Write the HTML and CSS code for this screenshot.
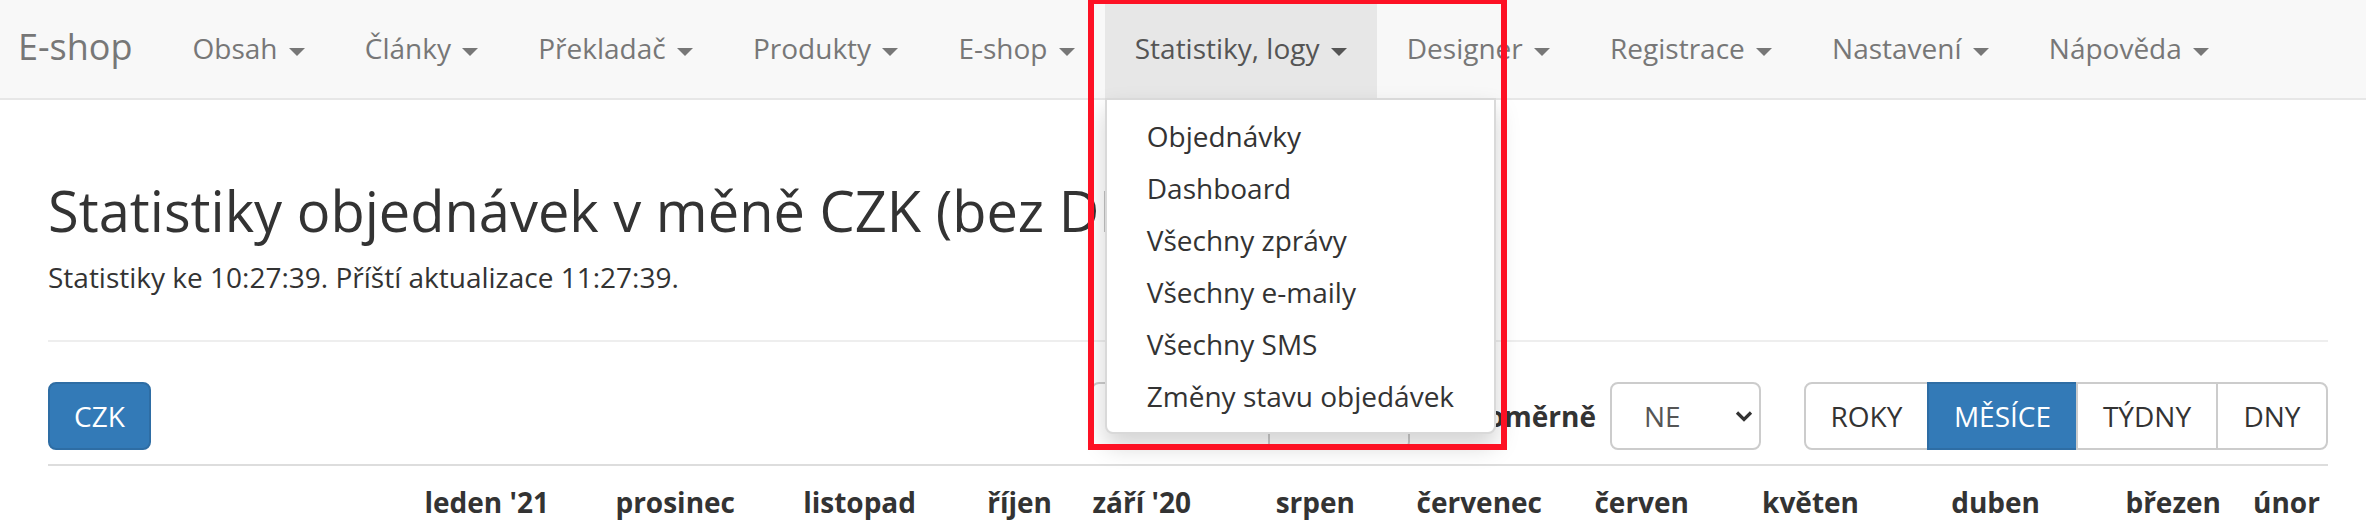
FILE: index.html
```html
<!DOCTYPE html>
<html lang="cs">
  <head>
    <meta charset="UTF-8" />
    <meta name="viewport" content="width=device-width, initial-scale=1.0" />
    <title>Statistiky objednávek</title>
    <link rel="stylesheet" href="styles.css">
  </head>
  <body>
    <nav class="navbar">
      <a class="brand" href="#">E-shop</a>
      <ul class="nav">
        <li><a href="#">Obsah <span class="caret"></span></a></li>
        <li><a href="#">Články <span class="caret"></span></a></li>
        <li><a href="#">Překladač <span class="caret"></span></a></li>
        <li><a href="#">Produkty <span class="caret"></span></a></li>
        <li><a href="#">E-shop <span class="caret"></span></a></li>
        <li class="open">
          <a href="#">Statistiky, logy <span class="caret"></span></a>
          <ul class="dropdown">
            <li><a href="#">Objednávky</a></li>
            <li><a href="#">Dashboard</a></li>
            <li><a href="#">Všechny zprávy</a></li>
            <li><a href="#">Všechny e-maily</a></li>
            <li><a href="#">Všechny SMS</a></li>
            <li><a href="#">Změny stavu objedávek</a></li>
          </ul>
        </li>
        <li><a href="#">Designer <span class="caret"></span></a></li>
        <li><a href="#">Registrace <span class="caret"></span></a></li>
        <li><a href="#">Nastavení <span class="caret"></span></a></li>
        <li><a href="#">Nápověda <span class="caret"></span></a></li>
      </ul>
    </nav>

    <!-- red highlight drawn over the open menu -->
    <div class="highlight"></div>

    <main class="page">
      <h1>Statistiky objednávek v měně CZK (bez DPH)</h1>
      <p class="updated">Statistiky ke 10:27:39. Příští aktualizace 11:27:39.</p>
      <hr />

      <div class="controls">
        <button type="button" class="btn btn-primary">CZK</button>

        <div class="filters">
          <div class="btn-group view">
            <button type="button" class="btn">Tabulka</button>
            <button type="button" class="btn">Graf</button>
          </div>

          <label class="ratio">Poměrně</label>
          <div class="select">
            <span>NE</span>
            <svg width="18" height="12" viewBox="0 0 18 12"><path d="M2 2.5 L9 9.5 L16 2.5" fill="none" stroke="#333" stroke-width="3.2"/></svg>
          </div>

          <div class="btn-group period">
            <button type="button" class="btn">ROKY</button>
            <button type="button" class="btn btn-primary">MĚSÍCE</button>
            <button type="button" class="btn">TÝDNY</button>
            <button type="button" class="btn">DNY</button>
          </div>
        </div>
      </div>

      <table class="stats">
        <thead>
          <tr>
            <th></th>
            <th>leden '21</th>
            <th>prosinec</th>
            <th>listopad</th>
            <th>říjen</th>
            <th>září '20</th>
            <th>srpen</th>
            <th>červenec</th>
            <th>červen</th>
            <th>květen</th>
            <th>duben</th>
            <th>březen</th>
            <th>únor</th>
          </tr>
        </thead>
      </table>
    </main>
  </body>
</html>
```

FILE: styles.css
```css
* {
  box-sizing: border-box;
}

body {
  margin: 0;
  font-family: "Open Sans", "Liberation Sans", sans-serif;
  font-size: 28px;
  line-height: 40px;
  color: #333;
  background-color: #fff;
  overflow: hidden;
}

a {
  text-decoration: none;
}

/* navbar */

.navbar {
  display: flex;
  height: 100px;
  background-color: #f8f8f8;
  border-bottom: 2px solid #e7e7e7;
}

.brand {
  padding: 27px 30px 0 18px;
  font-size: 36px;
  color: #777;
}

.nav {
  display: flex;
  margin: 0;
  padding: 0;
  list-style: none;
}

.nav > li {
  position: relative;
}

.nav > li > a {
  display: block;
  padding: 28px 30px 30px;
  color: #777;
}

.nav > li.open > a {
  background-color: #e7e7e7;
  color: #555;
}

.caret {
  display: inline-block;
  width: 0;
  height: 0;
  margin-left: 4px;
  vertical-align: middle;
  border-top: 8px solid;
  border-left: 8px solid transparent;
  border-right: 8px solid transparent;
}

.dropdown {
  position: absolute;
  top: 100%;
  left: 0;
  z-index: 10;
  min-width: 320px;
  margin: 0;
  padding: 10px 0;
  list-style: none;
  background-color: #fff;
  border: 2px solid rgba(0, 0, 0, 0.15);
  border-radius: 0 0 8px 8px;
  box-shadow: 0 12px 24px rgba(0, 0, 0, 0.175);
}

.dropdown a {
  display: block;
  padding: 6px 40px;
  color: #333;
  white-space: nowrap;
}

.highlight {
  position: absolute;
  left: 1088px;
  top: -2px;
  width: 419px;
  height: 452px;
  border: 6px solid #fd1124;
  z-index: 20;
}

/* page */

.page {
  padding: 80px 38px 0 48px;
}

h1 {
  margin: 0 0 15px;
  font-size: 56px;
  font-weight: 400;
  line-height: 1.1;
}

.updated {
  margin: 0;
}

hr {
  margin: 43px 0 40px;
  border: 0;
  border-top: 2px solid #eee;
}

.controls {
  display: flex;
  align-items: center;
}

.filters {
  display: flex;
  align-items: center;
  margin-left: auto;
}

.filters > * {
  flex-shrink: 0;
}

.btn {
  flex-shrink: 0;
  height: 68px;
  padding: 12px 24px;
  font-family: inherit;
  font-size: 28px;
  line-height: 40px;
  color: #333;
  background-color: #fff;
  border: 2px solid #ccc;
  border-radius: 8px;
}

.btn-primary {
  color: #fff;
  background-color: #337ab7;
  border-color: #2e6da4;
}

.btn-group {
  display: flex;
}

.btn-group .btn {
  border-radius: 0;
}

.btn-group .btn + .btn {
  margin-left: -2px;
}

.btn-group .btn:first-child {
  border-radius: 8px 0 0 8px;
}

.btn-group .btn:last-child {
  border-radius: 0 8px 8px 0;
}

.view .btn:first-child {
  width: 179px;
}

.view .btn:last-child {
  width: 142px;
}

.period .btn {
  padding: 12px 0;
}

.period .btn:nth-child(1) { width: 125px; }
.period .btn:nth-child(2) { width: 151px; }
.period .btn:nth-child(3) { width: 142px; }
.period .btn:nth-child(4) { width: 112px; }

.ratio {
  margin: 0 14px 0 59px;
  font-weight: 700;
}

.select {
  display: flex;
  align-items: center;
  justify-content: space-between;
  width: 151px;
  height: 68px;
  padding: 0 6px 0 32px;
  color: #555;
  border: 2px solid #ccc;
  border-radius: 8px;
}

.period {
  margin-left: 43px;
}

/* table */

.stats {
  width: 100%;
  margin-top: 14px;
  table-layout: fixed;
  border-collapse: collapse;
}

.stats th {
  padding: 16px 16px;
  text-align: right;
  font-weight: 700;
  white-space: nowrap;
  border-top: 2px solid #ddd;
}

/* first column takes the rest */
.stats th:nth-child(2) { width: 185px; }
.stats th:nth-child(3) { width: 186px; }
.stats th:nth-child(4) { width: 181px; }
.stats th:nth-child(5) { width: 136px; }
.stats th:nth-child(6) { width: 139px; }
.stats th:nth-child(7) { width: 164px; }
.stats th:nth-child(8) { width: 187px; }
.stats th:nth-child(9) { width: 147px; }
.stats th:nth-child(10) { width: 170px; }
.stats th:nth-child(11) { width: 181px; }
.stats th:nth-child(12) { width: 181px; }
.stats th:nth-child(13) { width: 91px; }
```
